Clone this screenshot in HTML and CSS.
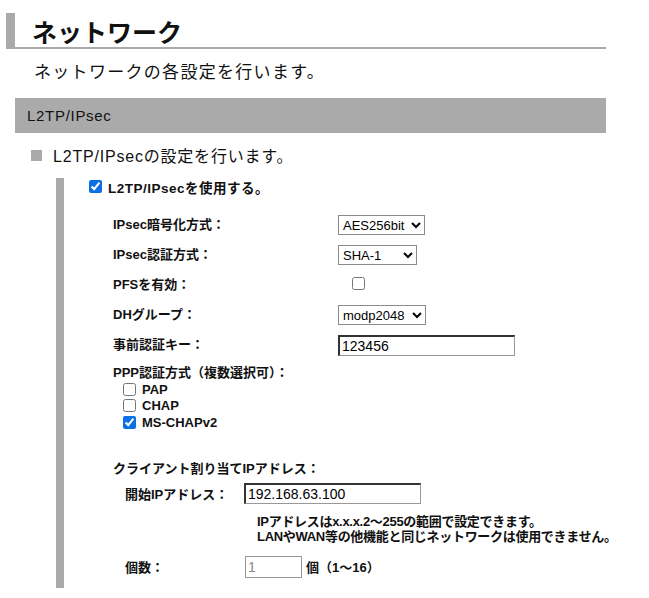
FILE: index.html
```html
<!DOCTYPE html>
<html lang="ja">
<head>
<meta charset="utf-8">
<title>ネットワーク</title>
<link rel="stylesheet" href="styles.css">
</head>
<body>
<div class="page">
  <h1 class="title">ネットワーク</h1>
  <p class="lead">ネットワークの各設定を行います。</p>
  <div class="section-bar">L2TP/IPsec</div>
  <div class="subhead"><span class="sq"></span><span>L2TP/IPsecの設定を行います。</span></div>
  <div class="panel">
    <label class="enable"><input type="checkbox" class="cb" checked><span>L2TP/IPsecを使用する。</span></label>
    <div class="grid">
      <div class="lbl">IPsec暗号化方式：</div>
      <div><select class="sel sel-aes"><option>AES256bit</option></select></div>
      <div class="lbl">IPsec認証方式：</div>
      <div><select class="sel sel-sha"><option>SHA-1</option></select></div>
      <div class="lbl">PFSを有効：</div>
      <div><input type="checkbox" class="cb pfs"></div>
      <div class="lbl">DHグループ：</div>
      <div><select class="sel sel-dh"><option>modp2048</option></select></div>
      <div class="lbl">事前認証キー：</div>
      <div><input type="text" class="txt key" value="123456"></div>
    </div>
    <div class="ppp">
      <div class="lbl">PPP認証方式（複数選択可）：</div>
      <label class="opt"><input type="checkbox" class="cb"><span>PAP</span></label>
      <label class="opt"><input type="checkbox" class="cb"><span>CHAP</span></label>
      <label class="opt"><input type="checkbox" class="cb" checked><span>MS-CHAPv2</span></label>
    </div>
    <div class="client">
      <div class="lbl">クライアント割り当てIPアドレス：</div>
      <div class="crow start">
        <div class="clbl">開始IPアドレス：</div>
        <input type="text" class="txt ip" value="192.168.63.100">
      </div>
      <div class="note">IPアドレスはx.x.x.2～255の範囲で設定できます。<br>LANやWAN等の他機能と同じネットワークは使用できません。</div>
      <div class="crow count">
        <div class="clbl">個数：</div>
        <input type="text" class="txt cnt" value="1" disabled>
        <span class="unit">個（1～16）</span>
      </div>
    </div>
  </div>
</div>
</body>
</html>
```
FILE: styles.css
```css
html, body {
  margin: 0;
  padding: 0;
  background: #fff;
}
body {
  font-family: "Liberation Sans", "Noto Sans CJK JP", sans-serif;
  color: #111;
}
.page {
  width: 600px;
  padding-left: 6px;
  padding-top: 13px;
}
.title {
  margin: 0;
  height: 34px;
  border-left: 9px solid #aaaaaa;
  border-bottom: 2px solid #aaaaaa;
  padding-left: 17px;
  font-size: 25px;
  line-height: 36px;
  font-weight: 700;
  font-family: "Noto Sans CJK JP", sans-serif;
  color: #111;
}
.lead {
  margin: 10px 0 0 28px;
  font-size: 17px;
  line-height: 24px;
  letter-spacing: 1.3px;
  font-family: "Noto Sans CJK JP", sans-serif;
}
.section-bar {
  margin: 15px 0 0 9px;
  height: 35px;
  background: #aaaaaa;
  padding-left: 12px;
  font-size: 15px;
  line-height: 35px;
  letter-spacing: 0.7px;
  color: #111;
}
.subhead {
  display: flex;
  align-items: center;
  margin: 11px 0 0 25px;
  height: 22px;
  font-size: 16px;
  letter-spacing: 0.8px;
}
.subhead .sq {
  width: 11px;
  height: 11px;
  background: #aaaaaa;
  margin-right: 11px;
}
.panel {
  margin: 12px 0 0 50px;
  border-left: 8px solid #aaaaaa;
  padding: 2px 0 10px 25px;
  height: 410px;
  box-sizing: border-box;
  font-size: 13px;
  font-weight: 700;
}
.cb {
  width: 13px;
  height: 13px;
  margin: 0;
  accent-color: #0b6fe6;
}
.enable {
  display: flex;
  align-items: center;
  gap: 6px;
  height: 13px;
  font-size: 13.5px;
  letter-spacing: 0.5px;
}
.grid {
  display: grid;
  grid-template-columns: 225px auto;
  grid-auto-rows: 20px;
  row-gap: 10px;
  align-items: center;
  margin: 22px 0 0 24px;
}
.lbl {
  line-height: 16px;
}
.sel {
  height: 20px;
  font-family: "Liberation Sans", Arial, sans-serif;
  font-size: 13px;
  font-weight: 400;
  color: #000;
  border: 1px solid #8a8a8a;
  border-radius: 0;
  background: #fff;
  padding: 0;
  margin: 0;
}
.sel-aes { width: 87px; }
.sel-sha { width: 79px; }
.sel-dh { width: 88px; }
.pfs {
  margin-left: 14px;
}
.txt {
  box-sizing: border-box;
  height: 21px;
  border-style: solid;
  border-width: 2px 1px 1px 2px;
  border-color: #333 #999 #999 #333;
  font-family: "Liberation Sans", Arial, sans-serif;
  font-size: 14px;
  font-weight: 400;
  color: #000;
  padding: 0 2px;
  margin: 0;
  outline: none;
}
.key { width: 177px; }
.ppp {
  margin: 10px 0 0 24px;
}
.opt {
  display: flex;
  align-items: center;
  gap: 6px;
  height: 16.5px;
  margin-left: 10px;
  font-size: 13px;
}
.client {
  margin: 30px 0 0 24px;
}
.crow {
  display: flex;
  align-items: center;
  margin-left: 12px;
}
.clbl {
  width: 119px;
}
.start {
  margin-top: 6px;
}
.ip { width: 177px; height: 21px; }
.note {
  margin: 10px 0 0 144px;
  line-height: 15px;
  white-space: nowrap;
  letter-spacing: -0.3px;
}
.count {
  margin-top: 12px;
}
.cnt {
  width: 57px;
  height: 22px;
  margin-left: 1px;
  border-width: 1px;
  border-color: #999;
  color: #888;
  background: #fff;
}
.unit {
  margin-left: 4px;
}
```
